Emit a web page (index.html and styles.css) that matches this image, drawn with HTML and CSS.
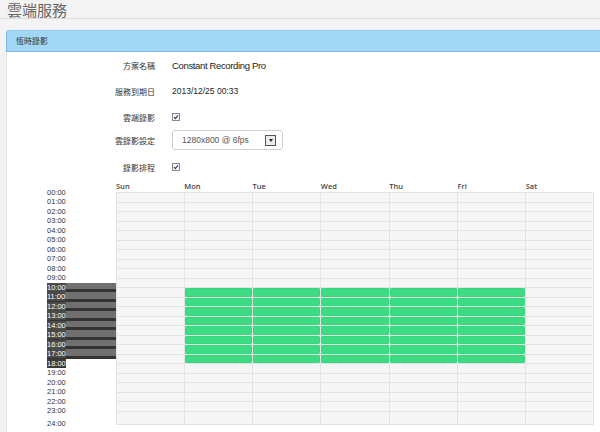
FILE: index.html
```html
<!DOCTYPE html>
<html>
<head>
<meta charset="utf-8">
<link rel="stylesheet" href="styles.css">
</head>
<body>
<header class="top"><h1 class="title">雲端服務</h1></header>
<section class="panel">
  <div class="panel-head">恆時錄影</div>
  <div class="panel-body">
    <div class="form">
      <div class="label">方案名稱</div><div class="value plan">Constant Recording Pro</div>
      <div class="label">服務到期日</div><div class="value date">2013/12/25 00:33</div>
      <div class="label">雲端錄影</div>
      <div class="value"><svg class="cb" viewBox="0 0 8 8" width="8" height="8"><rect x="0.5" y="0.5" width="7" height="7" fill="#f6f6f6" stroke="#8a8a8a"/><path d="M2 4.2 L3.3 5.6 L6 2.4" fill="none" stroke="#1b3f7a" stroke-width="1.1"/></svg></div>
      <div class="label">雲錄影設定</div>
      <div class="value"><div class="select"><span>1280x800 @ 6fps</span><span class="arrow"><i></i></span></div></div>
      <div class="label r5">錄影排程</div>
      <div class="value r5"><svg class="cb" viewBox="0 0 8 8" width="8" height="8"><rect x="0.5" y="0.5" width="7" height="7" fill="#f6f6f6" stroke="#8a8a8a"/><path d="M2 4.2 L3.3 5.6 L6 2.4" fill="none" stroke="#1b3f7a" stroke-width="1.1"/></svg></div>
    </div>
    <div class="schedule">
      <div class="corner"></div>
      <div class="days"><span>Sun</span><span>Mon</span><span>Tue</span><span>Wed</span><span>Thu</span><span>Fri</span><span>Sat</span></div>
      <div class="times">
        <div class="t">00:00</div><div class="t">01:00</div><div class="t">02:00</div><div class="t">03:00</div>
        <div class="t">04:00</div><div class="t">05:00</div><div class="t">06:00</div><div class="t">07:00</div>
        <div class="t">08:00</div><div class="t">09:00</div>
        <div class="t sel"><span>10:00</span></div><div class="t sel"><span>11:00</span></div>
        <div class="t sel"><span>12:00</span></div><div class="t sel"><span>13:00</span></div>
        <div class="t sel"><span>14:00</span></div><div class="t sel"><span>15:00</span></div>
        <div class="t sel"><span>16:00</span></div><div class="t sel"><span>17:00</span></div>
        <div class="t end"><span>18:00</span></div>
        <div class="t">19:00</div><div class="t">20:00</div><div class="t">21:00</div><div class="t">22:00</div>
        <div class="t">23:00</div><div class="t last">24:00</div>
      </div>
      <div class="week">
        <span></span><span></span><span></span><span></span><span></span><span></span><span></span>
        <span></span><span></span><span></span><span></span><span></span><span></span><span></span>
        <span></span><span></span><span></span><span></span><span></span><span></span><span></span>
        <span></span><span></span><span></span><span></span><span></span><span></span><span></span>
        <span></span><span></span><span></span><span></span><span></span><span></span><span></span>
        <span></span><span></span><span></span><span></span><span></span><span></span><span></span>
        <span></span><span></span><span></span><span></span><span></span><span></span><span></span>
        <span></span><span></span><span></span><span></span><span></span><span></span><span></span>
        <span></span><span></span><span></span><span></span><span></span><span></span><span></span>
        <span></span><span></span><span></span><span></span><span></span><span></span><span></span>
        <span></span><span class="on"></span><span class="on"></span><span class="on"></span><span class="on"></span><span class="on"></span><span></span>
        <span></span><span class="on"></span><span class="on"></span><span class="on"></span><span class="on"></span><span class="on"></span><span></span>
        <span></span><span class="on"></span><span class="on"></span><span class="on"></span><span class="on"></span><span class="on"></span><span></span>
        <span></span><span class="on"></span><span class="on"></span><span class="on"></span><span class="on"></span><span class="on"></span><span></span>
        <span></span><span class="on"></span><span class="on"></span><span class="on"></span><span class="on"></span><span class="on"></span><span></span>
        <span></span><span class="on"></span><span class="on"></span><span class="on"></span><span class="on"></span><span class="on"></span><span></span>
        <span></span><span class="on"></span><span class="on"></span><span class="on"></span><span class="on"></span><span class="on"></span><span></span>
        <span></span><span class="on"></span><span class="on"></span><span class="on"></span><span class="on"></span><span class="on"></span><span></span>
        <span></span><span></span><span></span><span></span><span></span><span></span><span></span>
        <span></span><span></span><span></span><span></span><span></span><span></span><span></span>
        <span></span><span></span><span></span><span></span><span></span><span></span><span></span>
        <span></span><span></span><span></span><span></span><span></span><span></span><span></span>
        <span></span><span></span><span></span><span></span><span></span><span></span><span></span>
        <span></span><span></span><span></span><span></span><span></span><span></span><span></span>
      </div>
    </div>
  </div>
</section>
</body>
</html>
```
FILE: styles.css
```css
html, body {
  margin: 0;
  padding: 0;
}
body {
  width: 600px;
  height: 432px;
  overflow: hidden;
  background: #f3f3f3;
  font-family: "Open Sans", "Noto Sans CJK TC", sans-serif;
  color: #333;
}
.top {
  height: 18px;
  border-bottom: 1px solid #dcdcdc;
  padding-left: 7px;
  display: flex;
  align-items: center;
}
.title {
  margin: 0;
  font-family: "Noto Sans CJK TC", sans-serif;
  font-weight: normal;
  font-size: 15px;
  line-height: 16px;
  padding-top: 2px;
  color: #666;
}
.panel {
  margin: 11px 0 0 6px;
  height: 402px;
  display: flex;
  flex-direction: column;
}
.panel-head {
  height: 20px;
  background: #a0d8f5;
  border: 1px solid #7cb9e9;
  border-top-color: #8fcbf1;
  border-right: 0;
  border-radius: 3px 0 0 0;
  padding-left: 9px;
  font-family: "Noto Sans CJK TC", sans-serif;
  font-size: 8px;
  line-height: 20px;
  color: #333;
}
.panel-body {
  flex: 1;
  background: #fff;
  border-left: 1px solid #e2e2e2;
}
.form {
  display: grid;
  grid-template-columns: 148px auto;
  grid-template-rows: 26px 26px 26px 20px 30px;
  column-gap: 17px;
  align-items: center;
}
.label {
  text-align: right;
  font-family: "Noto Sans CJK TC", sans-serif;
  font-size: 8px;
  color: #333;
}
.r5 {
  margin-top: 4px;
}
.value {
  display: flex;
  align-items: center;
}
.plan {
  font-family: "Liberation Sans", sans-serif;
  font-size: 9.5px;
  letter-spacing: -0.35px;
  color: #222;
}
.date {
  font-family: "Liberation Sans", sans-serif;
  font-size: 8.5px;
  color: #222;
}
.cb {
  display: block;
}
.select {
  width: 111px;
  height: 20px;
  box-sizing: border-box;
  border: 1px solid #cfcfcf;
  border-radius: 3px;
  display: flex;
  align-items: center;
  justify-content: space-between;
  padding: 0 6px 0 9px;
  font-family: "Liberation Sans", sans-serif;
  font-size: 8.5px;
  color: #555;
}
.arrow {
  width: 11px;
  height: 11px;
  box-sizing: border-box;
  border: 1px solid #555;
  background: #ececec;
  display: flex;
  align-items: center;
  justify-content: center;
}
.arrow i {
  width: 0;
  height: 0;
  border-left: 2.5px solid transparent;
  border-right: 2.5px solid transparent;
  border-top: 3px solid #222;
}
.schedule {
  margin-left: 40px;
  display: grid;
  grid-template-columns: 69px 478px;
  grid-template-rows: 12px auto;
  align-items: start;
}
.days {
  display: grid;
  grid-template-columns: repeat(7, 1fr);
  font-size: 7.5px;
  font-weight: 600;
  line-height: 12px;
  color: #444;
}
.times {
  margin-top: -4.25px;
  font-family: "Liberation Sans", sans-serif;
  font-size: 7.5px;
  color: #333;
}
.t {
  height: 9.5px;
  line-height: 9.5px;
}
.t.sel {
  background: linear-gradient(#707070 0 66%, #333 66% 100%);
  color: #fff;
}
.t.sel span {
  background: #4a4a4a;
}
.t.end span {
  background: #3a3a3a;
  color: #fff;
}
.t.last {
  margin-top: 3.5px;
}
.week {
  display: grid;
  grid-template-columns: repeat(7, 1fr);
  grid-template-rows: repeat(23, 8.5px) 12px;
  gap: 1px;
  background: #e3e3e3;
  border: 1px solid #e3e3e3;
}
.week span {
  background: #f5f5f5;
}
.week span.on {
  background: #3ddc84;
  border-radius: 2px;
  box-shadow: inset 0 0 0 0.5px #30cf77;
}
```
